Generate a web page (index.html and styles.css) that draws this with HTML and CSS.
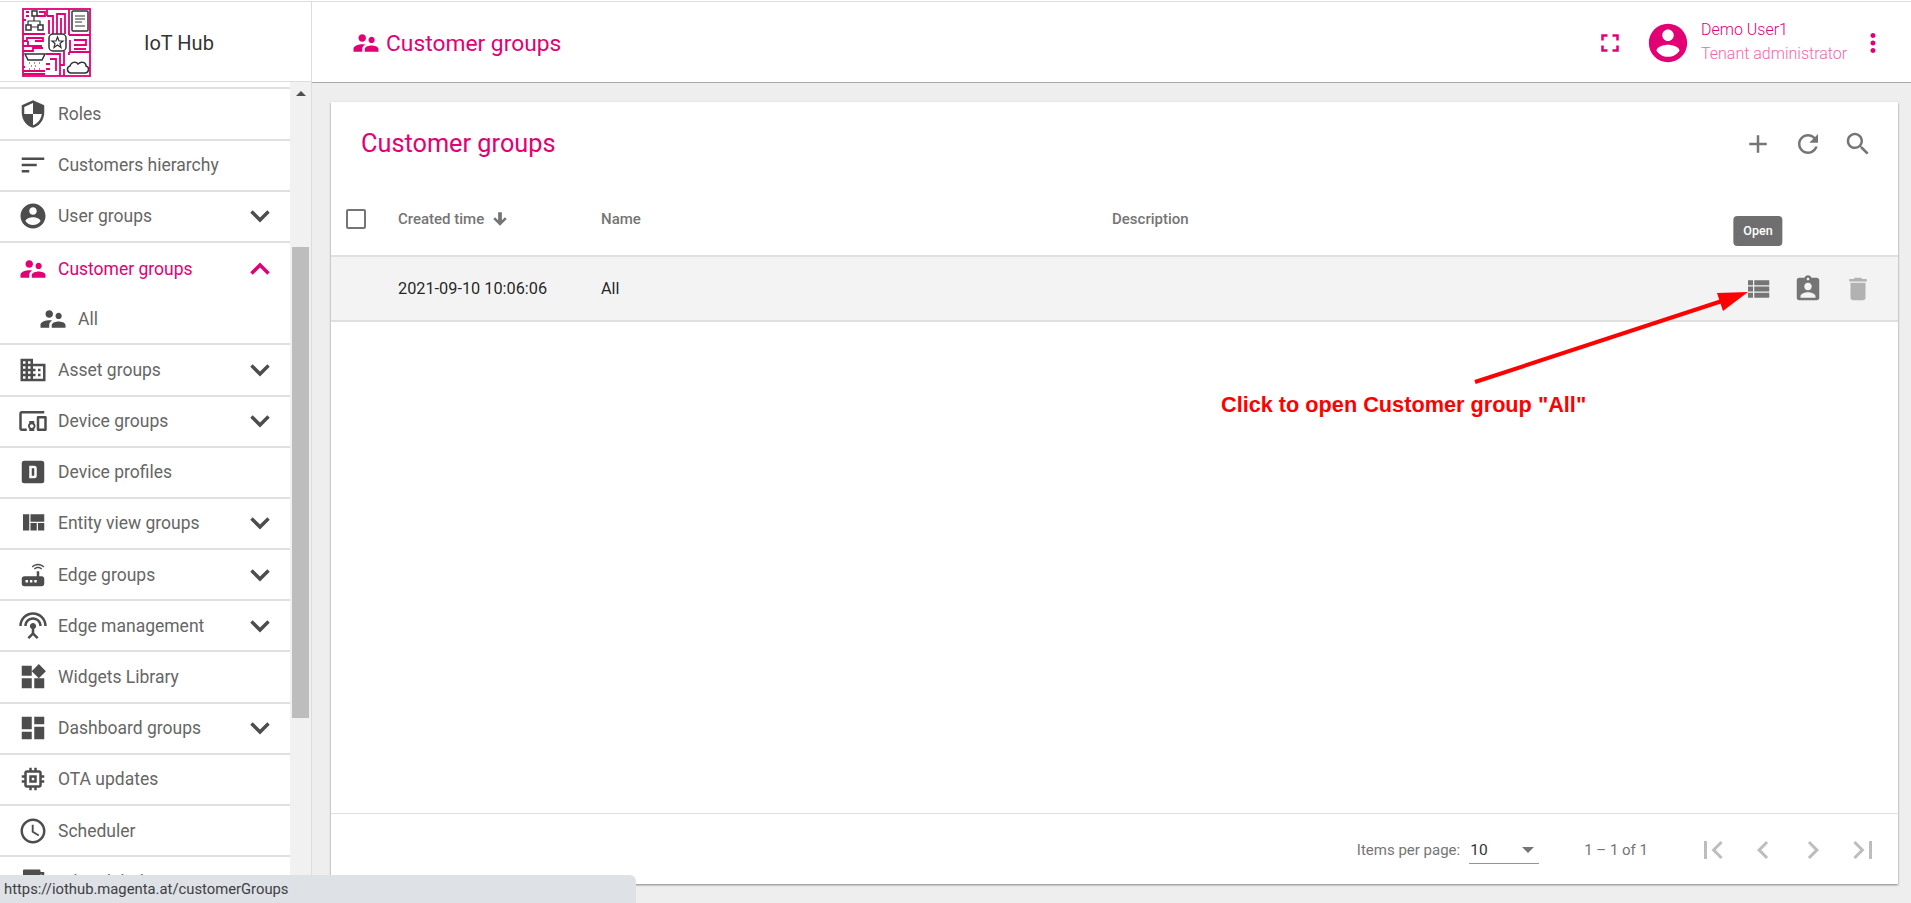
FILE: index.html
```html
<!DOCTYPE html>
<html lang="en">
<head>
    <meta charset="UTF-8">
    <meta name="viewport" content="width=device-width, initial-scale=1.0">
    <title>Customer groups</title>
    <link rel="stylesheet" href="styles.css">
</head>
<body>
<svg class="sprite" xmlns="http://www.w3.org/2000/svg">
    <symbol id="i-shield" viewBox="0 0 24 24"><path d="M12 1L3 5v6c0 5.55 3.84 10.74 9 12 5.16-1.26 9-6.45 9-12V5l-9-4zm0 10.99h7c-.53 4.12-3.28 7.79-7 8.94V12H5V6.3l7-3.11v8.8z"/></symbol>
    <symbol id="i-sort" viewBox="0 0 24 24"><path d="M3 18h6v-2H3v2zM3 6v2h18V6H3zm0 7h12v-2H3v2z"/></symbol>
    <symbol id="i-account" viewBox="0 0 24 24"><path d="M12 2C6.48 2 2 6.48 2 12s4.48 10 10 10 10-4.48 10-10S17.52 2 12 2zm0 3c1.66 0 3 1.34 3 3s-1.34 3-3 3-3-1.34-3-3 1.34-3 3-3zm0 14.2c-2.5 0-4.71-1.28-6-3.22.03-1.99 4-3.08 6-3.08 1.99 0 5.97 1.09 6 3.08-1.29 1.94-3.5 3.22-6 3.22z"/></symbol>
    <symbol id="i-people" viewBox="0 0 24 24"><path d="M16.5 12c1.38 0 2.49-1.12 2.49-2.5S17.88 7 16.5 7C15.12 7 14 8.12 14 9.5s1.12 2.5 2.5 2.5zM9 11c1.66 0 2.99-1.34 2.99-3S10.66 5 9 5C7.34 5 6 6.34 6 8s1.34 3 3 3zm7.5 3c-1.83 0-5.5.92-5.5 2.75V19h11v-2.25c0-1.83-3.67-2.75-5.5-2.75zM9 13c-2.33 0-7 1.17-7 3.5V19h7v-2.25c0-.85.33-2.34 2.37-3.47C10.5 13.1 9.66 13 9 13z"/></symbol>
    <symbol id="i-domain" viewBox="0 0 24 24"><path d="M12 7V3H2v18h20V7H12zM6 19H4v-2h2v2zm0-4H4v-2h2v2zm0-4H4V9h2v2zm0-4H4V5h2v2zm4 12H8v-2h2v2zm0-4H8v-2h2v2zm0-4H8V9h2v2zm0-4H8V5h2v2zm10 12h-8v-2h2v-2h-2v-2h2v-2h-2V9h8v10zm-2-8h-2v2h2v-2zm0 4h-2v2h2v-2z"/></symbol>
    <symbol id="i-devices" viewBox="0 0 24 24"><path d="M3 6h18V4H3c-1.1 0-2 .9-2 2v12c0 1.1.9 2 2 2h4v-2H3V6zm10 6H9v1.78c-.61.55-1 1.33-1 2.22s.39 1.67 1 2.22V20h4v-1.78c.61-.55 1-1.34 1-2.22s-.39-1.67-1-2.22V12zm-2 5.5c-.83 0-1.5-.67-1.5-1.5s.67-1.5 1.5-1.5 1.5.67 1.5 1.5-.67 1.5-1.5 1.5zM22 8h-6c-.5 0-1 .5-1 1v10c0 .5.5 1 1 1h6c.5 0 1-.5 1-1V9c0-.5-.5-1-1-1zm-1 10h-4v-8h4v8z"/></symbol>
    <symbol id="i-profile" viewBox="0 0 24 24"><path fill-rule="evenodd" d="M5 3h14a2 2 0 0 1 2 2v14a2 2 0 0 1-2 2H5a2 2 0 0 1-2-2V5a2 2 0 0 1 2-2zm4 4v10h4a2 2 0 0 0 2-2V9a2 2 0 0 0-2-2zm2 2h2v6h-2z"/></symbol>
    <symbol id="i-quilt" viewBox="0 0 24 24"><path d="M10 18h5v-6h-5v6zm-6 0h5V5H4v13zm12 0h5v-6h-5v6zM10 5v6h11V5H10z"/></symbol>
    <symbol id="i-router" viewBox="0 0 24 24"><path d="M20.2 5.900l.8-.8C19.600 3.700 17.800 3 16 3s-3.600.7-5 2.100l.8.8C13 4.800 14.500 4.200 16 4.200s3 .6 4.200 1.700zm-.9.8c-.9-.9-2.100-1.400-3.300-1.400s-2.400.5-3.300 1.400l.8.8c.7-.7 1.600-1 2.500-1 .9 0 1.800.3 2.500 1l.8-.8zM19 13h-2V9h-2v4H5c-1.100 0-2 .9-2 2v4c0 1.100.9 2 2 2h14c1.100 0 2-.9 2-2v-4c0-1.100-.9-2-2-2zM8 18H6v-2h2v2zm3.500 0h-2v-2h2v2zm3.500 0h-2v-2h2v2z"/></symbol>
    <symbol id="i-antenna" viewBox="0 0 24 24"><path d="M12 5c-3.870 0-7 3.130-7 7h2c0-2.760 2.240-5 5-5s5 2.240 5 5h2c0-3.870-3.130-7-7-7zm1 9.290c.88-.39 1.500-1.260 1.500-2.290 0-1.380-1.120-2.500-2.500-2.500S9.500 10.620 9.500 12c0 1.020.62 1.900 1.500 2.290v3.300L7.590 21 9 22.410l3-3 3 3L16.410 21 13 17.590v-3.300zM12 1C5.930 1 1 5.930 1 12h2c0-4.970 4.030-9 9-9s9 4.030 9 9h2c0-6.070-4.930-11-11-11z"/></symbol>
    <symbol id="i-widgets" viewBox="0 0 24 24"><path d="M13 13v8h8v-8h-8zM3 21h8v-8H3v8zM3 3v8h8V3H3zm13.660-1.310L11 7.340 16.660 13l5.660-5.660-5.660-5.650z"/></symbol>
    <symbol id="i-dashboard" viewBox="0 0 24 24"><path d="M3 13h8V3H3v10zm0 8h8v-6H3v6zm10 0h8V11h-8v10zm0-18v6h8V3h-8z"/></symbol>
    <symbol id="i-memory" viewBox="0 0 24 24"><path d="M15 9H9v6h6V9zm-2 4h-2v-2h2v2zm8-2V9h-2V7c0-1.100-.9-2-2-2h-2V3h-2v2h-2V3H9v2H7c-1.100 0-2 .9-2 2v2H3v2h2v2H3v2h2v2c0 1.100.9 2 2 2h2v2h2v-2h2v2h2v-2h2c1.100 0 2-.9 2-2v-2h2v-2h-2v-2h2zm-4 6H7V7h10v10z"/></symbol>
    <symbol id="i-schedule" viewBox="0 0 24 24"><path d="M11.990 2C6.470 2 2 6.480 2 12s4.470 10 9.990 10C17.520 22 22 17.520 22 12S17.520 2 11.990 2zM12 20c-4.420 0-8-3.580-8-8s3.580-8 8-8 8 3.580 8 8-3.580 8-8 8zm.5-13H11v6l5.250 3.150.75-1.230-4.500-2.670z"/></symbol>
    <symbol id="i-paint" viewBox="0 0 24 24"><path d="M18 4V3c0-.55-.45-1-1-1H5c-.55 0-1 .45-1 1v4c0 .55.45 1 1 1h12c.55 0 1-.45 1-1V6h1v4H9v11c0 .55.45 1 1 1h2c.55 0 1-.45 1-1v-9h8V4h-3z"/></symbol>
    <symbol id="i-down" viewBox="0 0 24 24"><path d="M17.500 7.700L12 13.200 6.500 7.700 4.700 9.500 12 16.800l7.300-7.300z"/></symbol>
    <symbol id="i-up" viewBox="0 0 24 24"><path d="M12 7.200L4.700 14.500l1.800 1.800 5.500-5.500 5.500 5.500 1.800-1.800z"/></symbol>
    <symbol id="i-fullscreen" viewBox="0 0 24 24"><path d="M7 14H5v5h5v-2H7v-3zm-2-4h2V7h3V5H5v5zm12 7h-3v2h5v-5h-2v3zM14 5v2h3v3h2V5h-5z"/></symbol>
    <symbol id="i-more" viewBox="0 0 24 24"><path d="M12 8c1.100 0 2-.9 2-2s-.9-2-2-2-2 .9-2 2 .9 2 2 2zm0 2c-1.100 0-2 .9-2 2s.9 2 2 2 2-.9 2-2-.9-2-2-2zm0 6c-1.100 0-2 .9-2 2s.9 2 2 2 2-.9 2-2-.9-2-2-2z"/></symbol>
    <symbol id="i-add" viewBox="0 0 24 24"><path d="M19 13h-6v6h-2v-6H5v-2h6V5h2v6h6v2z"/></symbol>
    <symbol id="i-refresh" viewBox="0 0 24 24"><path d="M17.650 6.350C16.200 4.900 14.210 4 12 4c-4.420 0-7.990 3.580-7.990 8s3.570 8 7.990 8c3.730 0 6.840-2.550 7.730-6h-2.080c-.82 2.330-3.040 4-5.650 4-3.310 0-6-2.690-6-6s2.690-6 6-6c1.660 0 3.140.69 4.220 1.780L13 11h7V4l-2.350 2.350z"/></symbol>
    <symbol id="i-search" viewBox="0 0 24 24"><path d="M15.500 14h-.79l-.28-.27C15.410 12.590 16 11.110 16 9.500 16 5.910 13.090 3 9.500 3S3 5.910 3 9.500 5.910 16 9.500 16c1.610 0 3.090-.59 4.230-1.570l.27.28v.79l5 4.990L20.490 19l-4.990-5zm-6 0C7.010 14 5 11.990 5 9.500S7.010 5 9.500 5 14 7.010 14 9.500 11.990 14 9.500 14z"/></symbol>
    <symbol id="i-list" viewBox="0 0 24 24"><path d="M4 14h4v-4H4v4zm0 5h4v-4H4v4zM4 9h4V5H4v4zm5 5h12v-4H9v4zm0 5h12v-4H9v4zM9 5v4h12V5H9z"/></symbol>
    <symbol id="i-assign" viewBox="0 0 24 24"><path d="M19 3h-4.180C14.400 1.840 13.300 1 12 1c-1.300 0-2.400.84-2.820 2H5c-1.100 0-2 .9-2 2v14c0 1.100.9 2 2 2h14c1.100 0 2-.9 2-2V5c0-1.100-.9-2-2-2zm-7 0c.55 0 1 .45 1 1s-.45 1-1 1-1-.45-1-1 .45-1 1-1zm0 4c1.660 0 3 1.340 3 3s-1.340 3-3 3-3-1.340-3-3 1.340-3 3-3zm6 12H6v-1.400c0-2 4-3.100 6-3.100s6 1.100 6 3.100V19z"/></symbol>
    <symbol id="i-delete" viewBox="0 0 24 24"><path d="M6 19c0 1.100.9 2 2 2h8c1.100 0 2-.9 2-2V7H6v12zM19 4h-3.500l-1-1h-5l-1 1H5v2h14V4z"/></symbol>
    <symbol id="i-arrow" viewBox="0 0 24 24"><path d="M21 12l-2.500-2.500-4 4V3h-5v10.500l-4-4L3 12l9 9z"/></symbol>
    <symbol id="i-first" viewBox="0 0 24 24"><path d="M18.410 16.590L13.820 12l4.590-4.590L17 6l-6 6 6 6zM6 6h2v12H6z"/></symbol>
    <symbol id="i-prev" viewBox="0 0 24 24"><path d="M15.410 7.410L14 6l-6 6 6 6 1.410-1.410L10.830 12z"/></symbol>
    <symbol id="i-next" viewBox="0 0 24 24"><path d="M10 6L8.590 7.410 13.170 12l-4.580 4.590L10 18l6-6z"/></symbol>
    <symbol id="i-last" viewBox="0 0 24 24"><path d="M5.590 7.410L10.180 12l-4.590 4.590L7 18l6-6-6-6zM16 6h2v12h-2z"/></symbol>
</svg>

<div class="app">
    <aside class="sidebar">
        <div class="brand">
            <svg class="logo" viewBox="0 0 69 69" xmlns="http://www.w3.org/2000/svg">
                <rect width="69" height="69" fill="#ffffff"/>
                <g fill="none" stroke="#e20074" stroke-width="1.800">
                    <rect x="1" y="1" width="67" height="67"/>
                    <path d="M25 1v7M47 1v26M25 8h6v18M35 26V6h8v20M39 10v16M27 12v14"/>
                    <path d="M1 26h22M1 33h4v-3h16v3h-8M1 38h19M1 43h10v-3h10M6 33v5"/>
                    <path d="M47 27h21M52 32h12v5H52M48 32v12h20M52 41h12"/>
                    <path d="M24 46h14v22M28 51h6v12M24 56h4M24 61h4M42 43v14h-4M42 61v7"/>
                    <path d="M47 47v-3M1 59h2M1 63h22M1 66h22M1 47h1"/>
                    <path d="M4 4h3M4 8h3M15 8h8v-4h-6M1 12h3"/>
                </g>
                <g fill="#ffffff" stroke="#333333" stroke-width="1.500">
                    <rect x="50" y="3" width="16" height="20" rx="1"/>
                    <rect x="27" y="26" width="17" height="17" rx="4"/>
                    <path d="M3 46h20l-3 6H6z"/>
                    <path d="M49 65c-4 0-5-6-1-7 1-4 6-5 8-2 3-3 8-2 8 2 4 1 3 7-1 7z"/>
                    <rect x="10" y="3" width="5" height="5"/>
                    <rect x="4" y="17" width="5" height="5"/>
                    <rect x="16" y="17" width="5" height="5"/>
                </g>
                <g fill="none" stroke="#333333" stroke-width="1.200">
                    <path d="M12 8v5M6 17v-4h12v4M9 19h7M53 8h10M53 11h10M53 14h7M53 18h10"/>
                    <path d="M35.500 29l1.500 4h4l-3 2.500 1 4-3.500-2.500-3.500 2.500 1-4-3-2.500h4z"/>
                    <path d="M7 55h1M12 55h1M17 55h1M9 58h1M13 58h1M7 61h1M12 61h1M17 61h1"/>
                </g>
            </svg>
            <span class="brand-name">IoT Hub</span>
        </div>
        <div class="nav-wrap">
            <ul class="nav">
                <li class="nav-peek"></li>
                <li class="nav-item"><svg class="ico"><use href="#i-shield"/></svg><span class="nav-label">Roles</span></li>
                <li class="nav-item"><svg class="ico"><use href="#i-sort"/></svg><span class="nav-label">Customers hierarchy</span></li>
                <li class="nav-item"><svg class="ico"><use href="#i-account"/></svg><span class="nav-label">User groups</span><svg class="chev"><use href="#i-down"/></svg></li>
                <li class="nav-item nav-open active"><svg class="ico"><use href="#i-people"/></svg><span class="nav-label">Customer groups</span><svg class="chev"><use href="#i-up"/></svg></li>
                <li class="nav-item nav-sub"><svg class="ico"><use href="#i-people"/></svg><span class="nav-label">All</span></li>
                <li class="nav-item"><svg class="ico"><use href="#i-domain"/></svg><span class="nav-label">Asset groups</span><svg class="chev"><use href="#i-down"/></svg></li>
                <li class="nav-item"><svg class="ico"><use href="#i-devices"/></svg><span class="nav-label">Device groups</span><svg class="chev"><use href="#i-down"/></svg></li>
                <li class="nav-item"><svg class="ico"><use href="#i-profile"/></svg><span class="nav-label">Device profiles</span></li>
                <li class="nav-item"><svg class="ico"><use href="#i-quilt"/></svg><span class="nav-label">Entity view groups</span><svg class="chev"><use href="#i-down"/></svg></li>
                <li class="nav-item"><svg class="ico"><use href="#i-router"/></svg><span class="nav-label">Edge groups</span><svg class="chev"><use href="#i-down"/></svg></li>
                <li class="nav-item"><svg class="ico"><use href="#i-antenna"/></svg><span class="nav-label">Edge management</span><svg class="chev"><use href="#i-down"/></svg></li>
                <li class="nav-item"><svg class="ico"><use href="#i-widgets"/></svg><span class="nav-label">Widgets Library</span></li>
                <li class="nav-item"><svg class="ico"><use href="#i-dashboard"/></svg><span class="nav-label">Dashboard groups</span><svg class="chev"><use href="#i-down"/></svg></li>
                <li class="nav-item"><svg class="ico"><use href="#i-memory"/></svg><span class="nav-label">OTA updates</span></li>
                <li class="nav-item"><svg class="ico"><use href="#i-schedule"/></svg><span class="nav-label">Scheduler</span></li>
                <li class="nav-item"><svg class="ico"><use href="#i-paint"/></svg><span class="nav-label">White labeling</span></li>
            </ul>
            <div class="scrollbar">
                <div class="scroll-up"></div>
                <div class="scroll-thumb"></div>
            </div>
        </div>
    </aside>

    <main class="main">
        <header class="topbar">
            <svg class="ico ico-pink"><use href="#i-people"/></svg>
            <h1 class="topbar-title">Customer groups</h1>
            <svg class="ico ico-pink topbar-full"><use href="#i-fullscreen"/></svg>
            <svg class="avatar"><use href="#i-account"/></svg>
            <div class="user">
                <div class="user-name">Demo User1</div>
                <div class="user-role">Tenant administrator</div>
            </div>
            <svg class="ico ico-pink"><use href="#i-more"/></svg>
        </header>

        <div class="content">
            <section class="card">
                <div class="card-head">
                    <h2 class="card-title">Customer groups</h2>
                    <div class="actions">
                        <svg class="ico ico-grey"><use href="#i-add"/></svg>
                        <svg class="ico ico-grey"><use href="#i-refresh"/></svg>
                        <svg class="ico ico-grey"><use href="#i-search"/></svg>
                    </div>
                </div>
                <div class="table-row table-head">
                    <div class="cell"><span class="checkbox"></span></div>
                    <div class="cell">Created time<svg class="sort-arrow"><use href="#i-arrow"/></svg></div>
                    <div class="cell">Name</div>
                    <div class="cell">Description</div>
                </div>
                <div class="table-row table-body">
                    <div class="cell"></div>
                    <div class="cell">2021-09-10 10:06:06</div>
                    <div class="cell">All</div>
                    <div class="cell"></div>
                    <div class="actions">
                        <span class="action-open">
                            <svg class="ico ico-grey"><use href="#i-list"/></svg>
                            <span class="tooltip">Open</span>
                        </span>
                        <svg class="ico ico-grey"><use href="#i-assign"/></svg>
                        <svg class="ico ico-off"><use href="#i-delete"/></svg>
                    </div>
                </div>
                <div class="card-fill"></div>
                <div class="pager">
                    <span class="pager-label">Items per page:</span>
                    <span class="pager-select"><span>10</span><i class="caret"></i></span>
                    <span class="pager-range">1 – 1 of 1</span>
                    <div class="pager-btns">
                        <svg class="pager-ico"><use href="#i-first"/></svg>
                        <svg class="pager-ico"><use href="#i-prev"/></svg>
                        <svg class="pager-ico"><use href="#i-next"/></svg>
                        <svg class="pager-ico"><use href="#i-last"/></svg>
                    </div>
                </div>
            </section>
        </div>
    </main>
</div>

<!-- annotation drawn over the screenshot -->
<svg class="note-arrow" viewBox="0 0 1911 903" xmlns="http://www.w3.org/2000/svg">
    <line x1="1475" y1="382" x2="1725" y2="300" stroke="#ff0000" stroke-width="4"/>
    <polygon points="1748,292 1717,293 1723,311" fill="#ff0000"/>
</svg>
<div class="note-text">Click to open Customer group "All"</div>

<div class="status">https://iothub.magenta.at/customerGroups</div>
</body>
</html>
```

FILE: styles.css
```css
:root {
    --pink: #e20074;
    --line: #e0e0e0;
    --nav-text: #666666;
    --nav-icon: #4d4d4d;
    --grey: #757575;
}

* {
    box-sizing: border-box;
}

html, body {
    height: 100%;
}

body {
    margin: 0;
    overflow: hidden;
    background-color: #ffffff;
    font-family: Roboto, sans-serif;
}

.sprite {
    display: none;
}

.app {
    display: flex;
    height: 100%;
    padding-top: 1px;
}

.ico {
    width: 30px;
    height: 30px;
    flex: none;
    fill: var(--nav-icon);
}

.ico-pink {
    fill: var(--pink);
}

.ico-grey {
    fill: var(--grey);
}

.ico-off {
    fill: #b2b2b2;
}

/* sidebar */
.sidebar {
    width: 312px;
    flex: none;
    display: flex;
    flex-direction: column;
    border-top: 1px solid #dddddd;
    border-right: 1px solid #dddddd;
    background-color: #ffffff;
}

.brand {
    height: 80px;
    flex: none;
    display: flex;
    align-items: center;
    padding: 2px 0 0 22px;
    border-bottom: 1px solid #dddddd;
}

.logo {
    width: 69px;
    height: 69px;
}

.brand-name {
    margin-left: 53px;
    font-size: 20px;
    color: #333333;
}

.nav-wrap {
    flex: 1;
    min-height: 0;
    display: flex;
}

.nav {
    flex: 1;
    margin: 0;
    padding: 0;
    list-style: none;
    overflow: hidden;
}

.nav-peek {
    height: 7.4px;
    border-bottom: 2px solid var(--line);
}

.nav-item {
    height: 51.2px;
    display: flex;
    align-items: center;
    padding: 0 14px 0 18px;
    border-bottom: 2px solid var(--line);
    color: var(--nav-text);
    font-size: 17.5px;
}

.nav-label {
    flex: 1;
    margin-left: 10px;
}

.chev {
    width: 32px;
    height: 32px;
    fill: var(--nav-icon);
}

.nav-open {
    border-bottom: none;
}

.nav-sub {
    padding-left: 38px;
}

.active, .active .ico, .active .chev {
    color: var(--pink);
    fill: var(--pink);
}

.scrollbar {
    width: 21px;
    flex: none;
    position: relative;
    background-color: #f1f1f1;
    padding: 0 2px;
}

.scroll-up {
    width: 0;
    margin: 9px auto 0;
    border: 5px solid transparent;
    border-top: none;
    border-bottom-color: #505050;
}

.scroll-thumb {
    position: absolute;
    left: 2px;
    right: 2px;
    top: 165px;
    height: 471px;
    background-color: #bdbdbd;
}

/* main */
.main {
    flex: 1;
    min-width: 0;
    display: flex;
    flex-direction: column;
    background-color: #eeeeee;
}

.topbar {
    height: 82px;
    flex: none;
    display: flex;
    align-items: center;
    padding: 2px 23px 0 39px;
    background-color: #ffffff;
    border-top: 1px solid #dddddd;
    border-bottom: 1px solid #a8a8a8;
}

.topbar-title {
    flex: 1;
    margin: 0 0 0 5px;
    font-size: 22.8px;
    font-weight: 400;
    color: var(--pink);
}

.topbar-full {
    margin-right: 20px;
}

.avatar {
    width: 46px;
    height: 46px;
    fill: var(--pink);
    margin-right: 10px;
}

.user {
    width: 157px;
    margin-top: -2px;
    font-size: 16px;
    font-weight: 300;
    line-height: 24px;
}

.user-name {
    color: var(--pink);
}

.user-role {
    color: #f266ac;
}

.content {
    flex: 1;
    min-height: 0;
    display: flex;
    padding: 19px 13px 19px 19px;
}

.card {
    flex: 1;
    display: flex;
    flex-direction: column;
    background-color: #ffffff;
    box-shadow: 0 1px 2px rgba(0, 0, 0, 0.45);
}

.card-head {
    height: 83px;
    flex: none;
    display: flex;
    align-items: center;
    justify-content: space-between;
    padding-left: 30px;
}

.card-title {
    margin: 0;
    font-size: 25.3px;
    font-weight: 400;
    color: var(--pink);
}

.actions {
    display: flex;
    align-items: center;
    gap: 20px;
    padding-right: 25px;
}

.table-row {
    display: grid;
    grid-template-columns: 67px 203px 511px 1fr auto;
    align-items: center;
}

.table-head {
    height: 72px;
    padding-bottom: 2px;
    border-bottom: 2px solid var(--line);
    font-size: 15px;
    font-weight: 500;
    color: var(--grey);
}

.table-body {
    height: 65px;
    border-bottom: 2px solid var(--line);
    background-color: #f3f3f3;
    font-size: 16.3px;
    color: rgba(0, 0, 0, 0.87);
}

.cell {
    display: flex;
    align-items: center;
}

.checkbox {
    width: 20px;
    height: 20px;
    margin-left: 15px;
    border: 2px solid var(--grey);
    border-radius: 2px;
}

.sort-arrow {
    width: 18px;
    height: 18px;
    margin-left: 7px;
    fill: var(--grey);
}

.action-open {
    position: relative;
    display: flex;
}

.tooltip {
    position: absolute;
    left: 50%;
    bottom: calc(100% + 28px);
    transform: translateX(-50%);
    padding: 0 10px;
    height: 30px;
    line-height: 30px;
    border-radius: 4px;
    background-color: #6f6f6f;
    color: #ffffff;
    font-size: 12.5px;
    font-weight: 500;
}

.card-fill {
    flex: 1;
}

.pager {
    height: 71px;
    flex: none;
    display: flex;
    align-items: center;
    justify-content: flex-end;
    padding-top: 2px;
    border-top: 1px solid var(--line);
    color: var(--grey);
    font-size: 15px;
}

.pager-select {
    width: 70px;
    height: 28px;
    display: flex;
    align-items: center;
    justify-content: space-between;
    margin-left: 9px;
    padding: 0 5px 0 1px;
    border-bottom: 1px solid #949494;
    color: #333333;
    font-size: 15.5px;
}

.caret {
    border: 6px solid transparent;
    border-bottom: none;
    border-top-color: #757575;
}

.pager-range {
    margin-left: 45px;
}

.pager-btns {
    display: flex;
    margin: 0 17px 0 47px;
    gap: 14px;
}

.pager-ico {
    width: 36px;
    height: 36px;
    fill: #bdbdbd;
}

/* annotation */
.note-arrow {
    position: absolute;
    top: 0;
    left: 0;
    width: 1911px;
    height: 903px;
    pointer-events: none;
}

.note-text {
    position: absolute;
    left: 1221px;
    top: 392px;
    font-family: "Liberation Sans", sans-serif;
    font-size: 21.7px;
    font-weight: 700;
    color: #ff0000;
}

.status {
    position: fixed;
    left: 0;
    bottom: 0;
    width: 636px;
    height: 28px;
    padding-left: 4px;
    line-height: 28px;
    font-size: 14.8px;
    color: #3c4043;
    background-color: #dee1e6;
    border-top-right-radius: 6px;
}
```
